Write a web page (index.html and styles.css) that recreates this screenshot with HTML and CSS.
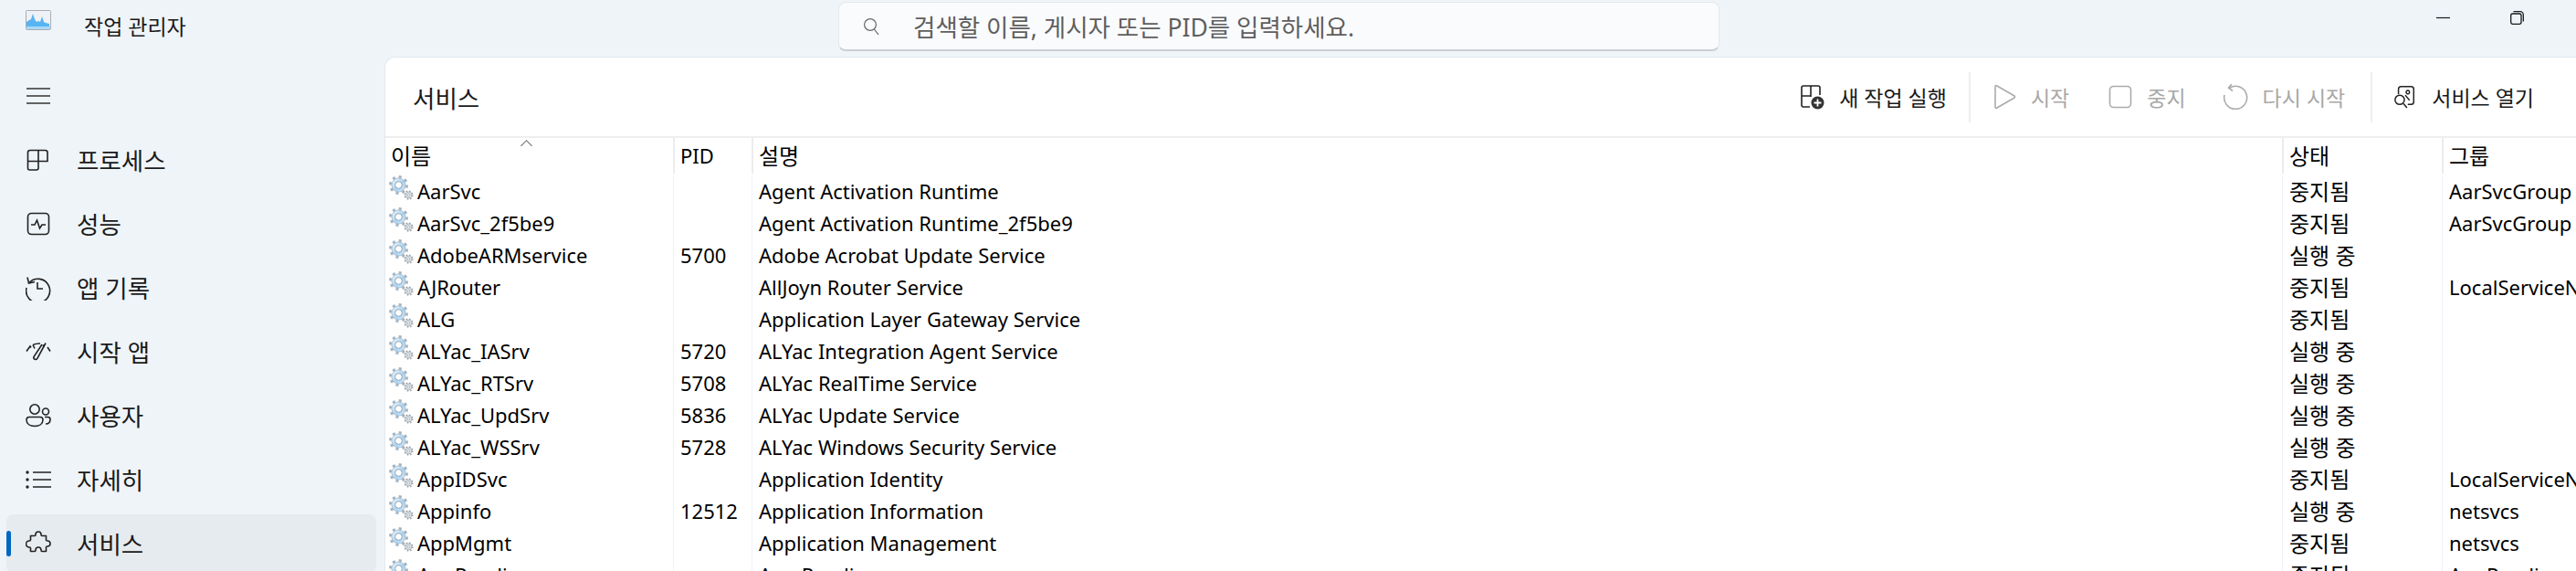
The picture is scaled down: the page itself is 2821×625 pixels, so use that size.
FILE: index.html
```html
<!DOCTYPE html>
<html lang="ko">
<head>
<meta charset="utf-8">
<title>작업 관리자</title>
<link rel="stylesheet" href="styles.css">
</head>
<body>
<svg class="defs" aria-hidden="true">
  <defs>
    <linearGradient id="gearfill" x1="0" y1="0" x2="1" y2="1">
      <stop offset="0" stop-color="#f6f9fc"/><stop offset=".55" stop-color="#a3d4f7"/><stop offset="1" stop-color="#e2e8ed"/>
    </linearGradient>
    <symbol id="gear" viewBox="0 0 27 27">
      <circle cx="10.5" cy="10.5" r="8.8" fill="none" stroke="#a6b3bf" stroke-width="3.4" stroke-dasharray="3 3.9"/>
      <circle cx="10.5" cy="10.5" r="7.6" fill="url(#gearfill)" stroke="#a6b3bf" stroke-width=".8"/>
      <circle cx="10.5" cy="10.5" r="3.8" fill="#fff" stroke="#98a6b2" stroke-width="1"/>
      <circle cx="21.5" cy="21.5" r="4.2" fill="none" stroke="#98a2ac" stroke-width="1.8" stroke-dasharray="1.6 1.7"/>
      <circle cx="21.5" cy="21.5" r="3.4" fill="#e4eaef" stroke="#98a2ac" stroke-width=".7"/>
      <circle cx="21.5" cy="21.5" r="1.4" fill="#fff" stroke="#87919b" stroke-width=".7"/>
    </symbol>
  </defs>
</svg>
<div class="app">
  <header class="titlebar">
    <div class="brand">
      <svg class="logo" viewBox="0 0 28 22"><rect x=".5" y=".5" width="27" height="21" rx="1" fill="#eef2f7" stroke="#a9adb3"/><path d="M1 19V13l3-2 2-1 2-6 2 6 2 3 2-1 2 1 2-6 2 6 2 1 4 1v5z" fill="#58b4f2"/><rect x="1" y="18" width="26" height="3" fill="#a9d9f8"/></svg>
      <span class="apptitle">작업 관리자</span>
    </div>
    <div class="search">
      <svg class="searchicon" viewBox="0 0 20 20"><circle cx="9" cy="8" r="6.4" fill="none" stroke="#666" stroke-width="1.2"/><path d="M13.5 13l4.5 6" stroke="#666" stroke-width="1.2"/></svg>
      <span class="placeholder">검색할 이름, 게시자 또는 PID를 입력하세요.</span>
    </div>
    <div class="winctl">
      <svg class="winbtn" viewBox="0 0 15 15"><path d="M0 7.5h15" stroke="#1a1a1a" stroke-width="1.2"/></svg>
      <svg class="winbtn" viewBox="0 0 15 15"><rect x=".7" y="3" width="11.3" height="11.3" rx="2" fill="none" stroke="#1a1a1a" stroke-width="1.3"/><path d="M3.5.7h7.3a3.5 3.5 0 0 1 3.5 3.5v7.3" fill="none" stroke="#1a1a1a" stroke-width="1.3"/></svg>
    </div>
  </header>
  <div class="main">
    <nav class="sidebar">
      <div class="navitem">
        <i class="mark"></i>
        <svg class="navicon" viewBox="0 0 28 28"><path d="M1 6h26M1 14h26M1 22h26" stroke="#333" stroke-width="1.6" fill="none"/></svg>
      </div>
      <div class="navitem">
        <i class="mark"></i>
        <svg class="navicon" viewBox="0 0 28 28"><path d="M14 3.5H5a2.5 2.5 0 0 0-2.500 2.500V23a2 2 0 0 0 2 2H12a2 2 0 0 0 2-2V3.500h7.500a2.500 2.500 0 0 1 2.500 2.500V15.500H2.500" fill="none" stroke="#222" stroke-width="1.6"/></svg>
        <span>프로세스</span>
      </div>
      <div class="navitem">
        <i class="mark"></i>
        <svg class="navicon" viewBox="0 0 28 28"><rect x="2.500" y="2.500" width="23" height="23" rx="4" fill="none" stroke="#222" stroke-width="1.6"/><path d="M6 15h4l2.500-5 3 9 2.500-4h4" fill="none" stroke="#222" stroke-width="1.600"/></svg>
        <span>성능</span>
      </div>
      <div class="navitem">
        <i class="mark"></i>
        <svg class="navicon" viewBox="0 0 28 28"><path d="M4 8.500A13 13 0 1 1 1 14M2 2.500l1.500 6.500 6.500-1.500M13 8v7h6" fill="none" stroke="#222" stroke-width="1.600"/></svg>
        <span>앱 기록</span>
      </div>
      <div class="navitem">
        <i class="mark"></i>
        <svg class="navicon" viewBox="0 0 28 28"><path d="M1 13.500l4-5.500 1 1.500M8 6.500a16 16 0 0 1 8-1.500M8 6.500l2 4M19 6.500l1.500 2.500M24 9l3 4.500M22 4.500L13 21a2 2 0 0 1-4-1.500L18 6" fill="none" stroke="#222" stroke-width="1.600"/></svg>
        <span>시작 앱</span>
      </div>
      <div class="navitem">
        <i class="mark"></i>
        <svg class="navicon" viewBox="0 0 28 28"><circle cx="10" cy="7" r="5.200" fill="none" stroke="#222" stroke-width="1.600"/><path d="M1 18.500a3 3 0 0 1 3-3h12a3 3 0 0 1 3 3c0 4.500-4 7-9 7s-9-2.500-9-7z" fill="none" stroke="#222" stroke-width="1.600"/><circle cx="22" cy="9.500" r="3.500" fill="none" stroke="#222" stroke-width="1.600"/><path d="M21 15.500h3.500a2.500 2.500 0 0 1 2.500 2.500c0 3-2 5-5 5" fill="none" stroke="#222" stroke-width="1.600"/></svg>
        <span>사용자</span>
      </div>
      <div class="navitem">
        <i class="mark"></i>
        <svg class="navicon" viewBox="0 0 28 28"><path d="M8 6h20M8 14h20M8 22h20" stroke="#222" stroke-width="1.600" fill="none"/><circle cx="2" cy="6" r="1.700" fill="#222"/><circle cx="2" cy="14" r="1.700" fill="#222"/><circle cx="2" cy="22" r="1.700" fill="#222"/></svg>
        <span>자세히</span>
      </div>
      <div class="navitem active">
        <i class="mark"></i>
        <svg class="navicon" viewBox="0 0 28 28"><path d="M11 4a3 3 0 0 1 6 0c0 1 0 1.500 1 1.500h4.500v4.500c0 1 .5 1 1.500 1a3 3 0 0 1 0 6c-1 0-1.500 0-1.500 1v4.500H18c-1 0-1-.5-1-1.500a3 3 0 0 0-6 0c0 1 0 1.500-1 1.500H5.500V19c0-1-.5-1-1.500-1a3.500 3.500 0 0 1 0-7c1 0 1.500 0 1.500-1V5.500H10c1 0 1-.5 1-1.500z" fill="none" stroke="#222" stroke-width="1.600" stroke-linejoin="round"/></svg>
        <span>서비스</span>
      </div>
    </nav>
    <section class="panel">
      <div class="toolbar">
        <h1 class="paneltitle">서비스</h1>
        <div class="actions">
          <div class="action newtask">
            <svg class="acticon" viewBox="0 0 26 28"><path d="M11 2H3a2 2 0 0 0-2 2v19a2 2 0 0 0 2 2h7M11 2v12M1 13h10M11 2h8a2 2 0 0 1 2 2v8" fill="none" stroke="#222" stroke-width="1.600"/><circle cx="18.500" cy="20.500" r="7" fill="#333"/><path d="M18.500 16.500v8M14.500 20.500h8" stroke="#fff" stroke-width="1.800"/></svg>
            <span>새 작업 실행</span>
          </div>
          <i class="tsep"></i>
          <div class="action off startbtn">
            <svg class="acticon" viewBox="0 0 26 28"><path d="M3 2.500v23a1 1 0 0 0 1.500 .8L24 15a1.200 1.200 0 0 0 0-2L4.500 1.700A1 1 0 0 0 3 2.500z" fill="none" stroke="#ababab" stroke-width="1.600"/></svg>
            <span>시작</span>
          </div>
          <div class="action off stopbtn">
            <svg class="acticon" viewBox="0 0 26 28"><rect x="1.500" y="2.500" width="23" height="23" rx="4" fill="none" stroke="#ababab" stroke-width="1.600"/></svg>
            <span>중지</span>
          </div>
          <div class="action off restartbtn">
            <svg class="acticon" viewBox="0 0 28 28"><path d="M8 4a12.500 12.500 0 1 1-6 8M10 0L6.500 4.200 11 7.500" fill="none" stroke="#ababab" stroke-width="1.600"/></svg>
            <span>다시 시작</span>
          </div>
          <i class="tsep last"></i>
          <div class="action">
            <svg class="acticon" viewBox="0 0 28 28"><path d="M6 11V5a3 3 0 0 1 3-3h12a3 3 0 0 1 3 3v15a3 3 0 0 1-3 3h-4" fill="none" stroke="#222" stroke-width="1.600"/><circle cx="7.500" cy="17.500" r="5.500" fill="none" stroke="#222" stroke-width="1.600"/><path d="M12 22l4 5M14 12l5 6M17 6.500a2 2 0 1 0 .1 0z" fill="none" stroke="#222" stroke-width="1.600"/></svg>
            <span>서비스 열기</span>
          </div>
        </div>
      </div>
      <div class="table">
        <div class="row head">
          <div class="cell c1 sorted">이름</div>
          <div class="cell c2 latin">PID</div>
          <div class="cell c3">설명</div>
          <div class="cell c4">상태</div>
          <div class="cell c5">그룹</div>
        </div>
        <div class="row"><div class="cell c1"><svg class="gear"><use href="#gear"/></svg>AarSvc</div><div class="cell c2"></div><div class="cell c3">Agent Activation Runtime</div><div class="cell c4">중지됨</div><div class="cell c5">AarSvcGroup</div></div>
        <div class="row"><div class="cell c1"><svg class="gear"><use href="#gear"/></svg>AarSvc_2f5be9</div><div class="cell c2"></div><div class="cell c3">Agent Activation Runtime_2f5be9</div><div class="cell c4">중지됨</div><div class="cell c5">AarSvcGroup</div></div>
        <div class="row"><div class="cell c1"><svg class="gear"><use href="#gear"/></svg>AdobeARMservice</div><div class="cell c2">5700</div><div class="cell c3">Adobe Acrobat Update Service</div><div class="cell c4">실행 중</div><div class="cell c5"></div></div>
        <div class="row"><div class="cell c1"><svg class="gear"><use href="#gear"/></svg>AJRouter</div><div class="cell c2"></div><div class="cell c3">AllJoyn Router Service</div><div class="cell c4">중지됨</div><div class="cell c5">LocalServiceNetworkRestricted</div></div>
        <div class="row"><div class="cell c1"><svg class="gear"><use href="#gear"/></svg>ALG</div><div class="cell c2"></div><div class="cell c3">Application Layer Gateway Service</div><div class="cell c4">중지됨</div><div class="cell c5"></div></div>
        <div class="row"><div class="cell c1"><svg class="gear"><use href="#gear"/></svg>ALYac_IASrv</div><div class="cell c2">5720</div><div class="cell c3">ALYac Integration Agent Service</div><div class="cell c4">실행 중</div><div class="cell c5"></div></div>
        <div class="row"><div class="cell c1"><svg class="gear"><use href="#gear"/></svg>ALYac_RTSrv</div><div class="cell c2">5708</div><div class="cell c3">ALYac RealTime Service</div><div class="cell c4">실행 중</div><div class="cell c5"></div></div>
        <div class="row"><div class="cell c1"><svg class="gear"><use href="#gear"/></svg>ALYac_UpdSrv</div><div class="cell c2">5836</div><div class="cell c3">ALYac Update Service</div><div class="cell c4">실행 중</div><div class="cell c5"></div></div>
        <div class="row"><div class="cell c1"><svg class="gear"><use href="#gear"/></svg>ALYac_WSSrv</div><div class="cell c2">5728</div><div class="cell c3">ALYac Windows Security Service</div><div class="cell c4">실행 중</div><div class="cell c5"></div></div>
        <div class="row"><div class="cell c1"><svg class="gear"><use href="#gear"/></svg>AppIDSvc</div><div class="cell c2"></div><div class="cell c3">Application Identity</div><div class="cell c4">중지됨</div><div class="cell c5">LocalServiceNetworkRestricted</div></div>
        <div class="row"><div class="cell c1"><svg class="gear"><use href="#gear"/></svg>Appinfo</div><div class="cell c2">12512</div><div class="cell c3">Application Information</div><div class="cell c4">실행 중</div><div class="cell c5">netsvcs</div></div>
        <div class="row"><div class="cell c1"><svg class="gear"><use href="#gear"/></svg>AppMgmt</div><div class="cell c2"></div><div class="cell c3">Application Management</div><div class="cell c4">중지됨</div><div class="cell c5">netsvcs</div></div>
        <div class="row"><div class="cell c1"><svg class="gear"><use href="#gear"/></svg>AppReadiness</div><div class="cell c2"></div><div class="cell c3">App Readiness</div><div class="cell c4">중지됨</div><div class="cell c5">AppReadiness</div></div>
      </div>
    </section>
  </div>
</div>
</body>
</html>
```
FILE: styles.css
```css
* { box-sizing: border-box; }
html, body { margin: 0; height: 100%; overflow: hidden; }
body {
  font-family: "Noto Sans", "Noto Sans CJK KR", sans-serif;
  color: #1a1a1a;
  background: #eff4f9;
}
.defs { position: absolute; width: 0; height: 0; }
.app { height: 625px; display: flex; flex-direction: column; overflow: hidden; }

.titlebar { height: 62px; flex: none; position: relative; display: flex; }
.brand { display: flex; align-items: flex-start; width: 918px; padding: 11px 0 0 28px; }
.logo { width: 28px; height: 22px; }
.apptitle { font-size: 23px; line-height: 36px; margin-left: 36px; }
.search {
  width: 965px; height: 54px; margin-top: 2px;
  background: #fafbfd;
  border: 1px solid #e4e8ec;
  border-bottom: 2px solid #c9ced3;
  border-radius: 8px;
  display: flex; align-items: center;
  padding-left: 25px;
}
.searchicon { width: 20px; height: 20px; }
.placeholder { margin-left: 36px; font-size: 26.5px; color: #5f5f5f; }
.winctl { display: flex; margin-left: auto; gap: 66px; padding: 12px 57px 0 0; align-items: flex-start; }
.winbtn { width: 15px; height: 15px; }

.main { flex: 1; display: flex; min-height: 0; }
.sidebar { width: 421px; flex: none; padding: 11px 9px 0 7px; display: flex; flex-direction: column; gap: 6px; }
.navitem { height: 64px; flex: none; display: flex; align-items: center; border-radius: 8px; font-size: 26.5px; }
.navitem span { margin-bottom: 2px; }
.navitem.active { background: #e6ebef; }
.mark { width: 5px; height: 28px; border-radius: 3px; flex: none; }
.active .mark { background: #0067c0; }
.navicon { width: 28px; height: 28px; margin-left: 16px; margin-right: 28px; flex: none; }

.panel {
  flex: 1; min-width: 0;
  background: #fff;
  border-top: 1px solid #e3e8ec;
  border-left: 1px solid #e3e8ec;
  border-top-left-radius: 12px;
  display: flex; flex-direction: column;
  overflow: hidden;
}
.toolbar { height: 88px; flex: none; display: flex; align-items: center; padding-left: 30px; border-bottom: 2px solid #eeeeee; }
.paneltitle { margin: 0; font-size: 26.5px; font-weight: 400; }
.actions { margin-left: auto; display: flex; align-items: center; padding-right: 46px; }
.action { display: flex; align-items: center; font-size: 23px; gap: 16px; }
.acticon { width: 26px; height: 28px; flex: none; }
.off { color: #a8a8a8; }
.tsep { width: 2px; height: 55px; background: #eeeeee; margin: 0 24px 0 24px; }
.tsep.last { margin-left: 28px; margin-right: 23px; }
.stopbtn { margin-left: 43px; }
.restartbtn { margin-left: 40px; }
.restartbtn .acticon { width: 28px; }

.row { display: flex; height: 35px; font-size: 22px; color: #000; }
.row.head { height: 41px; padding-bottom: 2px; font-size: 24px; }
.cell { border-left: 1px solid #edf2fa; padding-left: 7px; white-space: nowrap; overflow: hidden; line-height: 35px; display: flex; align-items: center; flex: none; }
.head .cell { border-left: 2px solid #ececec; padding-left: 6px; line-height: 39px; }
.head .latin { font-size: 22px; }
.c1 { width: 315px; padding-left: 4px; border-left: 0 !important; }
.c2 { width: 86px; }
.c3 { width: 1676px; }
.c4 { width: 175px; font-size: 24px; }
.c5 { flex: 1; min-width: 0; }
.gear { width: 27px; height: 27px; margin-right: 4px; margin-top: -8px; flex: none; }
.sorted { position: relative; padding-left: 8px; }
.sorted::after {
  content: ""; position: absolute; left: 150px; top: 4px;
  width: 8px; height: 8px;
  border-left: 1px solid #666; border-top: 1px solid #666;
  transform: rotate(45deg);
}
```
